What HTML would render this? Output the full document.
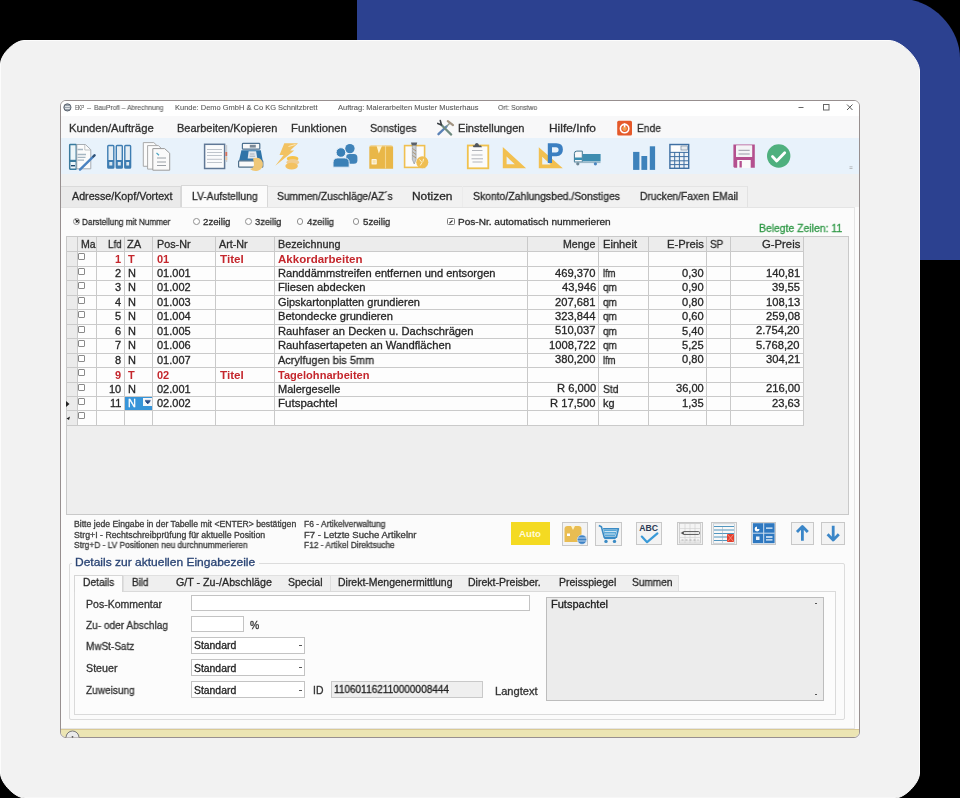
<!DOCTYPE html>
<html><head><meta charset="utf-8">
<style>
*{margin:0;padding:0;box-sizing:border-box}
html,body{width:960px;height:798px;overflow:hidden;background:#000;font-family:"Liberation Sans",sans-serif;color:#222;position:relative}
.a{position:absolute}
.t{position:absolute;white-space:nowrap;line-height:1;transform-origin:0 0;-webkit-text-stroke:0.3px currentColor;will-change:transform}
#blue{left:357px;top:0;width:603px;height:260px;background:#2c4190;border-top-right-radius:58px}
#panel{left:-1px;top:40px;width:921px;height:760px;background:#f2f2f2;border-radius:30px;box-shadow:0 0 0 1px #fbfbfb}
#win{left:60px;top:100px;width:800px;height:638px;border:1.2px solid #978f8f;border-radius:6px;background:#fbfbfb;overflow:hidden}
.ln{position:absolute;background:#d6d6d6}
.cb{position:absolute;width:7px;height:7px;border:1px solid #8a8a8a;border-radius:1px;background:#fff}
.inp{position:absolute;border:1px solid #c3c3c3;background:#fff}
.btn{position:absolute;border:1px solid #c8c8c8;background:#f3f3f3}
svg{position:absolute;overflow:visible}
</style></head><body>
<svg style="left:0;top:0" width="960" height="798" viewBox="0 0 960 798"><path d="M357 -1 L902 -1 C932.16 -1 960 27.84 960 58 L960 260 L357 260Z" fill="#2c4190"/><path d="M24 40.5 L889 40.5 C901.40 40.5 919.5 58.60 919.5 71 L919.5 773 C919.5 783.00 905.00 798 895 798 L25 798 C15.00 798 0.5 783.00 0.5 773 L0.5 64 C0.5 54.40 14.40 40.5 24 40.5Z" fill="#f2f2f2" stroke="#fcfcfc" stroke-width="1"/></svg>
<div class="a" id="win">
  <!-- inner coordinates: page - (61,101) -->
</div>
<!-- title bar -->
<div class="a" style="left:61px;top:101px;width:798px;height:15px;background:#fff;border-radius:5px 5px 0 0"></div>
<!-- menu bar -->
<div class="a" style="left:61px;top:116px;width:798px;height:22px;background:#f8f8f9"></div>
<!-- toolbar -->
<div class="a" style="left:61px;top:138px;width:798px;height:36px;background:#e8f2fb"></div>
<!-- tab strip bg -->
<div class="a" style="left:61px;top:174px;width:798px;height:33px;background:#f0f0f0"></div>
<!-- tabs -->
<div class="a" style="left:61px;top:185.5px;width:120px;height:22px;background:#eaeaea;border:1px solid #dadada;border-left:none;border-bottom:none"></div>
<div class="a" style="left:181px;top:185px;width:87px;height:23px;background:#fbfbfb;border:1px solid #d8d8d8;border-bottom:none"></div>
<div class="a" style="left:268px;top:185.5px;width:480px;height:22px;background:#f1f1f1;border-top:1px solid #e4e4e4;border-right:1px solid #e2e2e2"></div>
<div class="ln" style="left:462px;top:186px;width:1px;height:21px;background:#ebebeb"></div>
<!-- content panel -->
<div class="a" style="left:61px;top:207px;width:794px;height:522px;background:#fbfbfb;border:1px solid #e4e4e4;border-left:none"></div>
<!-- status bar -->
<div class="a" style="left:61px;top:728.5px;width:798px;height:8.5px;background:#ece5b3;border-top:1px solid #d9c995;border-radius:0 0 5px 5px"></div>

<!-- GRID -->
<div class="a" style="left:65.5px;top:236px;width:783px;height:278.5px;background:#eeeeee;border:1px solid #c9c9c9"></div>
<div class="a" style="left:66.5px;top:237.3px;width:737.0px;height:14.5px;background:#ececec"></div>
<div class="a" style="left:77.3px;top:251.8px;width:726.2px;height:173.64000000000001px;background:#fdfdfd"></div>
<div class="a" style="left:66.5px;top:251.8px;width:10.799999999999997px;height:173.64000000000001px;background:#ebebeb"></div>
<div class="ln" style="left:76.8px;top:236.3px;width:1px;height:189.14000000000004px;background:#c9c9c9"></div>
<div class="ln" style="left:95.8px;top:236.3px;width:1px;height:189.14000000000004px;background:#c9c9c9"></div>
<div class="ln" style="left:123.9px;top:236.3px;width:1px;height:189.14000000000004px;background:#c9c9c9"></div>
<div class="ln" style="left:152.0px;top:236.3px;width:1px;height:189.14000000000004px;background:#c9c9c9"></div>
<div class="ln" style="left:215.0px;top:236.3px;width:1px;height:189.14000000000004px;background:#c9c9c9"></div>
<div class="ln" style="left:274.0px;top:236.3px;width:1px;height:189.14000000000004px;background:#c9c9c9"></div>
<div class="ln" style="left:527.0px;top:236.3px;width:1px;height:189.14000000000004px;background:#c9c9c9"></div>
<div class="ln" style="left:597.8px;top:236.3px;width:1px;height:189.14000000000004px;background:#c9c9c9"></div>
<div class="ln" style="left:648.4px;top:236.3px;width:1px;height:189.14000000000004px;background:#c9c9c9"></div>
<div class="ln" style="left:706.0px;top:236.3px;width:1px;height:189.14000000000004px;background:#c9c9c9"></div>
<div class="ln" style="left:729.9px;top:236.3px;width:1px;height:189.14000000000004px;background:#c9c9c9"></div>
<div class="ln" style="left:803.0px;top:236.3px;width:1px;height:189.14000000000004px;background:#c9c9c9"></div>
<div class="ln" style="left:65.5px;top:251.3px;width:738.0px;height:1px;background:#cacaca"></div>
<div class="ln" style="left:65.5px;top:265.77000000000004px;width:738.0px;height:1px;background:#cacaca"></div>
<div class="ln" style="left:65.5px;top:280.24px;width:738.0px;height:1px;background:#cacaca"></div>
<div class="ln" style="left:65.5px;top:294.71000000000004px;width:738.0px;height:1px;background:#cacaca"></div>
<div class="ln" style="left:65.5px;top:309.18px;width:738.0px;height:1px;background:#cacaca"></div>
<div class="ln" style="left:65.5px;top:323.65000000000003px;width:738.0px;height:1px;background:#cacaca"></div>
<div class="ln" style="left:65.5px;top:338.12px;width:738.0px;height:1px;background:#cacaca"></div>
<div class="ln" style="left:65.5px;top:352.59000000000003px;width:738.0px;height:1px;background:#cacaca"></div>
<div class="ln" style="left:65.5px;top:367.06px;width:738.0px;height:1px;background:#cacaca"></div>
<div class="ln" style="left:65.5px;top:381.53000000000003px;width:738.0px;height:1px;background:#cacaca"></div>
<div class="ln" style="left:65.5px;top:396.0px;width:738.0px;height:1px;background:#cacaca"></div>
<div class="ln" style="left:65.5px;top:410.47px;width:738.0px;height:1px;background:#cacaca"></div>
<div class="ln" style="left:65.5px;top:424.94000000000005px;width:738.0px;height:1px;background:#cacaca"></div>
<div class="cb" style="left:78px;top:253.30px"></div>
<div class="cb" style="left:78px;top:267.77px"></div>
<div class="cb" style="left:78px;top:282.24px"></div>
<div class="cb" style="left:78px;top:296.71px"></div>
<div class="cb" style="left:78px;top:311.18px"></div>
<div class="cb" style="left:78px;top:325.65px"></div>
<div class="cb" style="left:78px;top:340.12px"></div>
<div class="cb" style="left:78px;top:354.59px"></div>
<div class="cb" style="left:78px;top:369.06px"></div>
<div class="cb" style="left:78px;top:383.53px"></div>
<div class="cb" style="left:78px;top:398.00px"></div>
<div class="cb" style="left:78px;top:412.47px"></div>
<div class="a" style="left:124.6px;top:397.00px;width:27.6px;height:13.47px;background:#3795d9"></div>
<div class="a" style="left:143.3px;top:397.50px;width:8.7px;height:8.5px;background:#f4f7fb"></div>
<svg style="left:145px;top:400.00px" width="6" height="5"><path d="M0 0.4h5.6M0.6 1.5h4.4L2.8 3.8z" stroke="#1c3f7a" stroke-width="0.8" fill="#1c3f7a"/></svg>
<svg style="left:66px;top:401.00px" width="4" height="6"><path d="M0 0L3.5 3L0 6z" fill="#222"/></svg>
<svg style="left:66px;top:415.97px" width="5" height="5"><path d="M0.5 2.5L4 0.5L3 4z" fill="#222"/></svg>

<!-- radio row -->
<div class="a" style="left:73px;top:217.8px;width:6.8px;height:6.8px;border:1px solid #8a8a8a;border-radius:50%;background:#fff"></div>
<svg style="left:74.5px;top:219.3px" width="4" height="4"><path d="M0.3 0.3L3.7 3.7M3.7 0.8L0.8 3.5" stroke="#222" stroke-width="1.1"/></svg>
<div class="a" style="left:193px;top:218px;width:6.8px;height:6.8px;border:1px solid #8f8f8f;border-radius:50%;background:#fff"></div>
<div class="a" style="left:244.8px;top:218px;width:6.8px;height:6.8px;border:1px solid #8f8f8f;border-radius:50%;background:#fff"></div>
<div class="a" style="left:296.6px;top:218px;width:6.8px;height:6.8px;border:1px solid #8f8f8f;border-radius:50%;background:#fff"></div>
<div class="a" style="left:352.6px;top:218px;width:6.8px;height:6.8px;border:1px solid #8f8f8f;border-radius:50%;background:#fff"></div>
<div class="a" style="left:447.3px;top:217.6px;width:7.5px;height:7.5px;border:1px solid #7a7a7a;border-radius:1.5px;background:#fff"></div>
<svg style="left:449px;top:219.5px" width="4" height="4"><path d="M0.5 3.2L3.5 0.5" stroke="#333" stroke-width="1.2"/></svg>

<!-- DETAILS group -->
<div class="a" style="left:69.4px;top:562.5px;width:775.3px;height:157.2px;border:1px solid #dcdcdc;border-radius:2px"></div>
<div class="a" style="left:72px;top:556px;width:187px;height:12px;background:#fbfbfb"></div>
<!-- tab strip -->
<div class="a" style="left:123px;top:575.3px;width:556px;height:16px;background:#efefef;border:1px solid #e0e0e0;border-bottom:none"></div>
<div class="ln" style="left:329.8px;top:576px;width:1px;height:15px;background:#dedede"></div>
<div class="a" style="left:74.3px;top:591px;width:761.6px;height:123.7px;border:1px solid #dadada;background:#fcfcfc"></div>
<div class="a" style="left:73.8px;top:574.7px;width:49.2px;height:17.3px;background:#fcfcfc;border:1px solid #d6d6d6;border-bottom:none"></div>
<!-- inputs -->
<div class="inp" style="left:191.4px;top:595.3px;width:338.2px;height:16.2px"></div>
<div class="inp" style="left:191.4px;top:615.8px;width:52.8px;height:16.7px"></div>
<div class="inp" style="left:191.4px;top:636.8px;width:113.8px;height:17px"></div>
<div class="inp" style="left:191.4px;top:659.3px;width:113.8px;height:16.7px"></div>
<div class="inp" style="left:191.4px;top:681px;width:113.8px;height:17.3px"></div>
<div class="a" style="left:299px;top:645px;width:3px;height:1.2px;background:#555"></div>
<div class="a" style="left:299px;top:667.3px;width:3px;height:1.2px;background:#555"></div>
<div class="a" style="left:299px;top:689.5px;width:3px;height:1.2px;background:#555"></div>
<div class="inp" style="left:330.8px;top:681px;width:152.2px;height:17.3px;background:#efefef;border-color:#c9c9c9"></div>
<div class="inp" style="left:546.3px;top:597px;width:277.3px;height:104.4px;background:#ececec;border-color:#bdbdbd"></div>
<div class="a" style="left:815px;top:602.5px;width:2px;height:1.2px;background:#555"></div>
<div class="a" style="left:815px;top:694px;width:2px;height:1.2px;background:#555"></div>

<!-- bottom buttons -->
<div class="a" style="left:511px;top:521.6px;width:38.5px;height:23.8px;background:#f4da22"></div>
<div class="btn" style="left:561.9px;top:521.6px;width:26px;height:24.2px"></div>
<div class="btn" style="left:595.4px;top:521.6px;width:26.2px;height:24.2px"></div>
<div class="btn" style="left:636.3px;top:521.5px;width:26px;height:23.7px"></div>
<div class="btn" style="left:677px;top:521.5px;width:25.7px;height:23.7px"></div>
<div class="btn" style="left:711.3px;top:521.5px;width:25.5px;height:23.7px"></div>
<div class="btn" style="left:751px;top:521.5px;width:25.2px;height:23.7px"></div>
<div class="btn" style="left:790.8px;top:521.5px;width:23.2px;height:23.7px"></div>
<div class="btn" style="left:821.2px;top:521.5px;width:23.5px;height:23.7px"></div>
<svg style="left:0;top:0" width="960" height="798" viewBox="0 0 960 798">
 <!-- title icon -->
 <circle cx="67.4" cy="107.4" r="3.6" fill="#9aa3ad" stroke="#5d6570" stroke-width="1"/>
 <path d="M65 106.5h4.8M65 108.5h4.8" stroke="#fff" stroke-width="0.7"/>
 <!-- window buttons -->
 <path d="M798.5 107.5h5" stroke="#666" stroke-width="1"/>
 <rect x="823.5" y="104.5" width="5.5" height="5.5" fill="none" stroke="#666" stroke-width="1"/>
 <path d="M847 104.5l5.5 5.5M852.5 104.5l-5.5 5.5" stroke="#555" stroke-width="1"/>
 <!-- tools icon -->
 <path d="M438.5 134.2L446.5 126.5" stroke="#5b82b6" stroke-width="2.4" stroke-linecap="round"/>
 <path d="M446.5 126.5L450.5 122.5" stroke="#8a9a90" stroke-width="1.4"/>
 <path d="M447.8 121.2L453 125.2" stroke="#a29482" stroke-width="2.2" stroke-linecap="round"/>
 <path d="M451.2 134.6L441.5 125" stroke="#6e8a80" stroke-width="2.2" stroke-linecap="round"/>
 <path d="M441.5 125L437.8 123.4M441.5 125L440.3 120.6" stroke="#3a3f44" stroke-width="1.6" stroke-linecap="round"/>
 <!-- ende icon -->
 <rect x="617.2" y="120.8" width="14.8" height="14.6" rx="1.5" fill="#e5592a"/>
 <circle cx="624.6" cy="128.6" r="4.2" fill="none" stroke="#fff" stroke-width="1.6"/>
 <circle cx="624.6" cy="128.6" r="2.3" fill="#f0a050"/>
 <path d="M624.6 123.3v4" stroke="#fff" stroke-width="1.5"/>

 <!-- T1: binder + doc + pen -->
 <rect x="69.7" y="144.6" width="6.6" height="24.6" rx="0.6" fill="#eef6f9" stroke="#3a7b9e" stroke-width="1.5"/>
 <rect x="69.7" y="159.8" width="6.6" height="2.2" fill="#3a7b9e"/>
 <rect x="71" y="165" width="4" height="1.4" fill="#1f4a6e"/>
 <path d="M76.8 144.5h8.6l5.4 5.2v19.1h-14z" fill="#fbfbfb" stroke="#9ea4aa" stroke-width="0.9"/>
 <path d="M84.8 144.8v5.2h5.6" fill="none" stroke="#a8acb0" stroke-width="0.7"/>
 <path d="M77.5 149.5h5.5M77.5 154.5h8.5M77.5 157.3h8M77.5 160.2h6.5" stroke="#a6b6c2" stroke-width="1.3"/>
 <path d="M80 169.6L94.5 155.3" stroke="#4a82c0" stroke-width="2.4" stroke-linecap="round"/>
 <path d="M93.2 156.6L94.6 155.2" stroke="#34506e" stroke-width="2" stroke-linecap="round"/>
 <!-- T2: three binders -->
 <g fill="#e6eef4" stroke="#3e7db2" stroke-width="1.4">
  <rect x="107.8" y="145.5" width="6" height="22.5" rx="0.8"/>
  <rect x="116.3" y="145.5" width="6" height="22.5" rx="0.8"/>
  <rect x="124.8" y="145.5" width="5.8" height="22.5" rx="0.8"/>
 </g>
 <g fill="#3e7db2"><rect x="107.8" y="160" width="6" height="8"/><rect x="116.3" y="160" width="6" height="8"/><rect x="124.8" y="160" width="5.8" height="8"/></g>
 <g fill="#dce8f0"><rect x="109.3" y="162" width="3" height="3.5"/><rect x="117.8" y="162" width="3" height="3.5"/><rect x="126.3" y="162" width="2.8" height="3.5"/></g>
 <!-- T3: stacked docs -->
 <path d="M143.3 142.6h10.5l3.4 3.2v20.5h-13.9z" fill="#fbfbfb" stroke="#a0a0a0" stroke-width="0.9"/>
 <path d="M147.6 145.6h10.8l3.4 3.2v20.3h-14.2z" fill="#fbfbfb" stroke="#a0a0a0" stroke-width="0.9"/>
 <path d="M152.8 148.6h11.8l5.1 4.6v17h-16.9z" fill="#fafafa" stroke="#9a9a9a" stroke-width="1"/>
 <path d="M156.5 153l2.5 2.2" stroke="#4aa3c0" stroke-width="1.2"/>
 <path d="M157 158h9M157 162h9M157 165.5h9" stroke="#9a9fa5" stroke-width="1.1"/>
 <!-- T4: ledger -->
 <rect x="204.6" y="144.3" width="20" height="24.2" fill="#fafbfc" stroke="#607896" stroke-width="1.5"/>
 <path d="M207 149.5h15M207 152.5h15M207 155.5h15M207 159.3h15M207 162.5h15" stroke="#b8bec6" stroke-width="0.9"/>
 <rect x="225.4" y="145" width="1.8" height="17" fill="#c9ccd0"/>
 <rect x="225.4" y="152" width="1.8" height="4" fill="#d9705a"/>
 <rect x="225.4" y="157" width="1.8" height="3" fill="#f0c8a0"/>
 <!-- T5: cash register -->
 <rect x="242.4" y="143.4" width="17.4" height="5.8" rx="0.8" fill="#f8f8f8" stroke="#4f7290" stroke-width="1.2"/>
 <rect x="249.8" y="144.8" width="6" height="2.8" fill="#7a8896"/>
 <path d="M241.4 150.2h19.4l2 10.8h-23.8z" fill="#2f74a8"/>
 <path d="M248.6 151.2h7.5l1.2 7.4h-9.6z" fill="#e2e8ee"/>
 <path d="M250 154h4.5M249.6 156.2h5.5" stroke="#8a98a6" stroke-width="0.7"/>
 <rect x="238.6" y="160.8" width="24.2" height="6.4" rx="0.8" fill="#fafafa" stroke="#50708a" stroke-width="1.2"/>
 <path d="M253 158.5q7-2.5 9.5 3.5q1.5 6-4 8.5q-5 1.5-8.5-1.5q3.5-0.5 4-4q0-3-1-6.5z" fill="#f0c878"/>
 <!-- T6: lightning + coins -->
 <path d="M284.3 143.2L298 143.2L290.2 150.6L294.2 150.6L275.3 165.8L283.6 155L279.5 155Z" fill="#f2c262"/>
 <path d="M288.5 146.5l7-2" stroke="#fff5d8" stroke-width="0.8"/>
 <ellipse cx="292.6" cy="158.7" rx="5.8" ry="2.6" fill="#f5c24a"/>
 <ellipse cx="292.8" cy="162.2" rx="6.3" ry="3.2" fill="#f1cc8e"/>
 <ellipse cx="291.6" cy="166.1" rx="6.3" ry="3.3" fill="#f3c160"/>
 <!-- T7: people -->
 <g fill="#3f83b9">
  <circle cx="349.9" cy="148.6" r="4.7"/>
  <path d="M346.2 163.8v-6.5q0-3.3 3.3-3.3h4.5q3.4 0 3.4 3.6v2.6q0 3.6-3.5 3.6z"/>
 </g>
 <g fill="#3a80b6" stroke="#e5eef8" stroke-width="1">
  <circle cx="340.9" cy="152.5" r="4.8"/>
  <path d="M333 167.2v-4.5q0-4.8 4.8-4.8h6.5q4.9 0 4.9 4.8v4.5z"/>
 </g>
 <!-- T8: box -->
 <path d="M369.3 147.5q0-2 2-2h19.5q2.3 0 2.3 2v21.2h-23.8z" fill="#e9b748"/>
 <path d="M376.5 145.5l2.3 8l3.3-8z" fill="#fff4d0"/>
 <path d="M385.5 145.6v23" stroke="#f4d58c" stroke-width="1.1"/>
 <rect x="372" y="159.6" width="4.2" height="4.4" fill="#f7e4b0" stroke="#fff" stroke-width="0.8"/>
 <path d="M369.5 146h23" stroke="#f2dca8" stroke-width="0.8"/>
 <!-- T9: clipboard drill -->
 <rect x="404.6" y="145.6" width="20" height="21.8" fill="#fbfbfb" stroke="#f0c050" stroke-width="1.6"/>
 <path d="M411 142.5h6.2l-0.8 3h-4.6z" fill="#5a6068"/>
 <path d="M412.3 145.5h3.8v14l-1.9 4.5l-1.9-4.5z" fill="#c9cdd2" stroke="#7a8088" stroke-width="0.5"/>
 <path d="M412.5 148.5l3.6 2.5M412.5 152l3.6 2.5M412.5 155.5l3.6 2.5" stroke="#a08050" stroke-width="0.7"/>
 <circle cx="422.3" cy="162.3" r="6" fill="#efbe52"/>
 <path d="M419.5 159.5l2.5 3l-1.8 3M423.5 158.8l-0.6 3" fill="none" stroke="#fff3cf" stroke-width="1"/>
 <!-- T10: clipboard -->
 <rect x="467.8" y="145.5" width="20.5" height="22.8" fill="#fbfbfb" stroke="#f0c24e" stroke-width="1.8"/>
 <path d="M473.5 147.2h8.5l-1-1.8h-1.8q-1-2.3-2.4-2.3q-1.4 0-2.4 2.3h-1.8z" fill="#50565e"/>
 <path d="M472 150.5h10.5M471.5 155h11M471.5 158.8h11.5M472.5 162h10" stroke="#a9adb3" stroke-width="0.9"/>
 <!-- T11: triangle -->
 <path d="M502.8 147l23.3 21.2h-23.3z M506.6 156.6v7.6h8.2z" fill="#f2c050" fill-rule="evenodd"/>
 <!-- T12: P + triangle -->
 <path d="M538.8 147.2l24 21h-24z M542.2 156.8v7.6h8.4z" fill="#f2c050" fill-rule="evenodd"/>
 <path d="M547.8 163V143.2h8.5q6.6 0 6.6 6.4q0 6.6-6.6 6.6h-4.3v6.8z M552 147.2v5.3h4q2.6 0 2.6-2.7q0-2.6-2.6-2.6z" fill="#3b7fc1" fill-rule="evenodd"/>
 <!-- T13: truck -->
 <path d="M574.4 162v-8.5q0-2.4 2.4-2.4h5.5v10.9z" fill="#f8f8f8" stroke="#3f7590" stroke-width="1"/>
 <path d="M574.8 157.5h7.2v2.5h-7.2z" fill="#3a90b3"/>
 <rect x="582.6" y="154" width="18" height="7.4" fill="#3e8db0"/>
 <rect x="574.5" y="161.5" width="26" height="1.6" fill="#9ab8c8"/>
 <circle cx="577.8" cy="163.8" r="1.6" fill="#6d8796"/>
 <circle cx="595.4" cy="163.8" r="1.6" fill="#4a86c0"/>
 <!-- T14: bars -->
 <g fill="#3d82bb"><rect x="633.1" y="151.9" width="6.3" height="18"/><rect x="641.4" y="156" width="5.8" height="13.9"/><rect x="649.8" y="146.3" width="5.3" height="23.6"/></g>
 <!-- T15: calculator -->
 <rect x="669.9" y="144.5" width="18.8" height="23.8" fill="#eef3f8" stroke="#3e6fa2" stroke-width="1.4"/>
 <rect x="671.3" y="146" width="8.6" height="5.4" fill="#fdfdfd"/>
 <rect x="681" y="146" width="6.3" height="4" fill="#e6eaee" stroke="#6a7f96" stroke-width="0.6"/>
 <g stroke="#3e6fa2" stroke-width="1"><path d="M670 152.4h18.6M670 156.6h18.6M670 160.8h18.6M670 164.6h18.6"/><path d="M674.7 152v16M679.4 152v16M684 152v16"/></g>
 <!-- T16: floppy -->
 <path d="M733.4 144.6h21.4v23.2h-20.4l-1-1z" fill="#b4508f"/>
 <rect x="736" y="145.2" width="16.2" height="11.8" rx="0.6" fill="#f4f4f6"/>
 <path d="M738.5 150.3h11.2M738.5 154h11.2" stroke="#9a9aa8" stroke-width="1"/>
 <rect x="737.2" y="160" width="13.5" height="8" fill="#fafafa"/>
 <rect x="739.5" y="161" width="2.3" height="6.5" fill="#b4508f"/>
 <!-- T17: check -->
 <circle cx="778.7" cy="156" r="11.7" fill="#4fb07e"/>
 <path d="M772.5 156.6l4.2 4.3l8-8.2" fill="none" stroke="#fff" stroke-width="2.8" stroke-linecap="round" stroke-linejoin="round"/>
 <!-- grip -->
 <path d="M849.5 166.8h3M849.5 168.5h3" stroke="#999" stroke-width="0.6"/>

 <!-- buttons icons -->
 <text x="519" y="537" font-family="Liberation Sans" font-size="8.5" font-weight="bold" fill="#fffbd8" textLength="22" lengthAdjust="spacingAndGlyphs">Auto</text>
 <!-- btn2 -->
 <path d="M564.5 529q0-3 3-3h11q3 0 3 3v13h-17z" fill="#e9bd52"/>
 <path d="M571 526l2 4l2-4" fill="#fff3c8"/>
 <rect x="567" y="533.5" width="3" height="2.5" fill="#fff"/>
 <circle cx="582" cy="539.6" r="4.7" fill="#3e83c6" stroke="#e8f0f8" stroke-width="0.6"/>
 <path d="M577.8 538h8.4M577.8 541h8.4" stroke="#dfeaf5" stroke-width="0.8"/>
 <!-- btn3 cart -->
 <path d="M598.8 525.5l2.6 1.2l2.8 10.5h12.2l2-8.5h-15.3" fill="none" stroke="#3a8bc5" stroke-width="1.6" stroke-linejoin="round"/>
 <path d="M603.3 529.5h13.8l-1.8 6.5h-10.4z" fill="#58a6d6"/>
 <path d="M604.5 531.5h11.5M605 534h10" stroke="#e8f4fa" stroke-width="0.8"/>
 <circle cx="606" cy="541.4" r="1.7" fill="#3a8bc5"/><circle cx="614.5" cy="541.4" r="1.7" fill="#3a8bc5"/>
 <path d="M604.2 538.5h11.5" stroke="#3a8bc5" stroke-width="1.2"/>
 <!-- btn4 ABC -->
 <text x="639.3" y="531" font-family="Liberation Sans" font-size="8.4" font-weight="bold" fill="#2a3a55" textLength="18.8" lengthAdjust="spacingAndGlyphs">ABC</text>
 <path d="M641.8 536.6l5.3 5.6l10.3-8.8" fill="none" stroke="#3a9ad8" stroke-width="2.2" stroke-linejoin="round" stroke-linecap="round"/>
 <!-- btn5 table -->
 <rect x="679.5" y="523.5" width="21" height="19.5" fill="#f4f4f4" stroke="#c0c0c0" stroke-width="0.7"/>
 <path d="M680 528.5h20M680 533h20M680 537.5h20M680 541h20M685 524v19M690 524v19M695 524v19" stroke="#cfcfcf" stroke-width="0.6"/>
 <rect x="683" y="531.5" width="16.5" height="3" rx="1" fill="none" stroke="#555" stroke-width="0.9"/>
 <circle cx="682.7" cy="533" r="1.3" fill="#555"/>
 <path d="M681.5 540h17" stroke="#888" stroke-width="0.6" stroke-dasharray="2 2"/>
 <!-- btn6 table red x -->
 <rect x="713.5" y="523.8" width="21" height="19.5" fill="#f8f8f8" stroke="#b8c4cc" stroke-width="0.7"/>
 <path d="M714 526.5h20M714 530h20M714 533.5h20M714 537h20M714 540.5h20" stroke="#3d8ab8" stroke-width="0.9"/>
 <path d="M722.5 527v16" stroke="#9ab" stroke-width="0.5"/>
 <rect x="727" y="534" width="7" height="8" fill="#e4402e"/>
 <path d="M727.5 534.5l6 7M733.5 534.5l-6 7" stroke="#f89080" stroke-width="0.9"/>
 <!-- btn7 grid -->
 <rect x="752.8" y="523.2" width="21.8" height="20" fill="#2e78c0"/>
 <path d="M763.7 523.2v20M752.8 533.2h21.8" stroke="#cfe0f0" stroke-width="1"/>
 <path d="M757 526.5a2.5 2.5 0 1 0 2.6 2.6h-2.6z" fill="#fff"/>
 <path d="M766 528.2h6.5M766 537h6.5M766 539.8h6.5" stroke="#eaf2fa" stroke-width="1.3"/>
 <rect x="756" y="536.5" width="3.5" height="3.5" fill="#eaf2fa"/>
 <!-- btn8 up -->
 <path d="M802.4 540.8v-14M797 532l5.4-5.6l5.4 5.6" fill="none" stroke="#3a86c8" stroke-width="2.8" stroke-linejoin="round"/>
 <!-- btn9 down -->
 <path d="M833.2 525.7v14M827.6 534.3l5.6 5.8l5.6-5.8" fill="none" stroke="#3a86c8" stroke-width="2.8" stroke-linejoin="round"/>
 <!-- status circle -->
 <path d="M66 737.5a6.5 6.5 0 0 1 13 0" fill="#eaeaea" stroke="#777" stroke-width="1"/>
 <circle cx="72.5" cy="736.8" r="0.9" fill="#555"/>
</svg>


<div class="t" style="left:74.70px;top:104.21px;font-size:7.2px;color:#595959;transform:scaleX(0.6463);-webkit-text-stroke:0.1px currentColor;">EKP</div>
<div class="t" style="left:87.00px;top:104.21px;font-size:7.2px;color:#595959;-webkit-text-stroke:0.1px currentColor;">–</div>
<div class="t" style="left:94.00px;top:104.21px;font-size:7.2px;color:#595959;transform:scaleX(0.9373);-webkit-text-stroke:0.1px currentColor;">BauProfi – Abrechnung</div>
<div class="t" style="left:175.00px;top:104.21px;font-size:7.2px;color:#595959;transform:scaleX(1.0399);-webkit-text-stroke:0.1px currentColor;">Kunde: Demo GmbH &amp; Co KG Schnitzbrett</div>
<div class="t" style="left:337.50px;top:104.21px;font-size:7.2px;color:#595959;transform:scaleX(1.0435);-webkit-text-stroke:0.1px currentColor;">Auftrag: Malerarbeiten Muster Musterhaus</div>
<div class="t" style="left:497.50px;top:104.21px;font-size:7.2px;color:#595959;transform:scaleX(0.9435);-webkit-text-stroke:0.1px currentColor;">Ort: Sonstwo</div>
<div class="t" style="left:68.70px;top:122.89px;font-size:11px;color:#303030;transform:scaleX(1.0257);">Kunden/Aufträge</div>
<div class="t" style="left:177.40px;top:122.89px;font-size:11px;color:#303030;">Bearbeiten/Kopieren</div>
<div class="t" style="left:290.70px;top:122.89px;font-size:11px;color:#303030;transform:scaleX(1.0232);">Funktionen</div>
<div class="t" style="left:369.80px;top:122.89px;font-size:11px;color:#303030;transform:scaleX(0.9646);">Sonstiges</div>
<div class="t" style="left:457.50px;top:122.89px;font-size:11px;color:#303030;transform:scaleX(1.0066);">Einstellungen</div>
<div class="t" style="left:549.00px;top:122.89px;font-size:11px;color:#303030;transform:scaleX(1.0824);">Hilfe/Info</div>
<div class="t" style="left:637.00px;top:122.89px;font-size:11px;color:#303030;transform:scaleX(0.9337);">Ende</div>
<div class="t" style="left:71.70px;top:191.14px;font-size:10.7px;color:#2a2a2a;">Adresse/Kopf/Vortext</div>
<div class="t" style="left:192.00px;top:191.14px;font-size:10.7px;color:#2a2a2a;transform:scaleX(0.9627);">LV-Aufstellung</div>
<div class="t" style="left:277.00px;top:191.14px;font-size:10.7px;color:#2a2a2a;transform:scaleX(0.9595);">Summen/Zuschläge/AZ´s</div>
<div class="t" style="left:412.00px;top:191.14px;font-size:10.7px;color:#2a2a2a;transform:scaleX(1.1145);">Notizen</div>
<div class="t" style="left:472.90px;top:191.14px;font-size:10.7px;color:#2a2a2a;transform:scaleX(0.9740);">Skonto/Zahlungsbed./Sonstiges</div>
<div class="t" style="left:640.00px;top:191.14px;font-size:10.7px;color:#2a2a2a;transform:scaleX(0.9592);">Drucken/Faxen EMail</div>
<div class="t" style="left:81.90px;top:217.19px;font-size:9.7px;color:#2e2e2e;transform:scaleX(0.8455);">Darstellung mit Nummer</div>
<div class="t" style="left:203.10px;top:217.19px;font-size:9.7px;color:#2e2e2e;">2zeilig</div>
<div class="t" style="left:255.20px;top:217.19px;font-size:9.7px;color:#2e2e2e;transform:scaleX(0.9611);">3zeilig</div>
<div class="t" style="left:307.00px;top:217.19px;font-size:9.7px;color:#2e2e2e;transform:scaleX(0.9829);">4zeilig</div>
<div class="t" style="left:362.50px;top:217.19px;font-size:9.7px;color:#2e2e2e;transform:scaleX(0.9939);">5zeilig</div>
<div class="t" style="left:458.30px;top:217.19px;font-size:9.7px;color:#2e2e2e;transform:scaleX(1.0389);">Pos-Nr. automatisch nummerieren</div>
<div class="t" style="left:758.75px;top:222.76px;font-size:10.8px;color:#2f9846;transform:scaleX(0.9648);">Belegte Zeilen: 11</div>
<div class="t" style="left:80.90px;top:238.78px;font-size:10.6px;color:#2c2c2c;transform:scaleX(0.9919);">Ma</div>
<div class="t" style="left:107.50px;top:238.78px;font-size:10.6px;color:#2c2c2c;transform:scaleX(0.9332);">Lfd</div>
<div class="t" style="left:127.00px;top:238.78px;font-size:10.6px;color:#2c2c2c;transform:scaleX(1.0482);">ZA</div>
<div class="t" style="left:157.00px;top:238.78px;font-size:10.6px;color:#2c2c2c;transform:scaleX(1.0161);">Pos-Nr</div>
<div class="t" style="left:218.75px;top:238.78px;font-size:10.6px;color:#2c2c2c;transform:scaleX(1.0159);">Art-Nr</div>
<div class="t" style="left:277.50px;top:238.78px;font-size:10.6px;color:#2c2c2c;transform:scaleX(1.0201);">Bezeichnung</div>
<div class="t" style="left:562.70px;top:238.78px;font-size:10.6px;color:#2c2c2c;">Menge</div>
<div class="t" style="left:602.70px;top:238.78px;font-size:10.6px;color:#2c2c2c;transform:scaleX(1.0492);">Einheit</div>
<div class="t" style="left:666.70px;top:238.78px;font-size:10.6px;color:#2c2c2c;transform:scaleX(1.0595);">E-Preis</div>
<div class="t" style="left:710.00px;top:238.78px;font-size:10.6px;color:#2c2c2c;transform:scaleX(0.9406);">SP</div>
<div class="t" style="left:761.70px;top:238.78px;font-size:10.6px;color:#2c2c2c;transform:scaleX(1.0667);">G-Preis</div>
<div class="t" style="left:115.17px;top:254.09px;font-size:11px;color:#c4262c;font-weight:bold;-webkit-text-stroke:0;">1</div>
<div class="t" style="left:127.75px;top:254.09px;font-size:11px;color:#c4262c;font-weight:bold;-webkit-text-stroke:0;">T</div>
<div class="t" style="left:156.70px;top:254.09px;font-size:11px;color:#c4262c;font-weight:bold;-webkit-text-stroke:0;">01</div>
<div class="t" style="left:220.00px;top:254.09px;font-size:11px;color:#c4262c;font-weight:bold;-webkit-text-stroke:0;transform:scaleX(1.0592);">Titel</div>
<div class="t" style="left:277.50px;top:254.09px;font-size:11px;color:#c4262c;font-weight:bold;-webkit-text-stroke:0;transform:scaleX(1.0470);">Akkordarbeiten</div>
<div class="t" style="left:115.17px;top:267.76px;font-size:11px;color:#262626;">2</div>
<div class="t" style="left:127.75px;top:267.76px;font-size:11px;color:#262626;">N</div>
<div class="t" style="left:156.70px;top:267.76px;font-size:11px;color:#262626;">01.001</div>
<div class="t" style="left:277.50px;top:267.76px;font-size:11px;color:#262626;transform:scaleX(1.0076);">Randdämmstreifen entfernen und entsorgen</div>
<div class="t" style="left:555.35px;top:267.59px;font-size:11.2px;color:#262626;">469,370</div>
<div class="t" style="left:602.80px;top:267.76px;font-size:11px;color:#262626;transform:scaleX(0.8520);">lfm</div>
<div class="t" style="left:681.91px;top:267.67px;font-size:11.1px;color:#262626;">0,30</div>
<div class="t" style="left:765.78px;top:267.59px;font-size:11.2px;color:#262626;">140,81</div>
<div class="t" style="left:115.17px;top:282.23px;font-size:11px;color:#262626;">3</div>
<div class="t" style="left:127.75px;top:282.23px;font-size:11px;color:#262626;">N</div>
<div class="t" style="left:156.70px;top:282.23px;font-size:11px;color:#262626;">01.002</div>
<div class="t" style="left:277.50px;top:282.23px;font-size:11px;color:#262626;transform:scaleX(1.0147);">Fliesen abdecken</div>
<div class="t" style="left:561.58px;top:282.06px;font-size:11.2px;color:#262626;">43,946</div>
<div class="t" style="left:602.80px;top:282.23px;font-size:11px;color:#262626;transform:scaleX(0.9096);">qm</div>
<div class="t" style="left:681.91px;top:282.14px;font-size:11.1px;color:#262626;">0,90</div>
<div class="t" style="left:772.00px;top:282.06px;font-size:11.2px;color:#262626;">39,55</div>
<div class="t" style="left:115.17px;top:296.70px;font-size:11px;color:#262626;">4</div>
<div class="t" style="left:127.75px;top:296.70px;font-size:11px;color:#262626;">N</div>
<div class="t" style="left:156.70px;top:296.70px;font-size:11px;color:#262626;">01.003</div>
<div class="t" style="left:277.50px;top:296.70px;font-size:11px;color:#262626;">Gipskartonplatten grundieren</div>
<div class="t" style="left:555.35px;top:296.53px;font-size:11.2px;color:#262626;">207,681</div>
<div class="t" style="left:602.80px;top:296.70px;font-size:11px;color:#262626;transform:scaleX(0.9096);">qm</div>
<div class="t" style="left:681.91px;top:296.61px;font-size:11.1px;color:#262626;">0,80</div>
<div class="t" style="left:765.78px;top:296.53px;font-size:11.2px;color:#262626;">108,13</div>
<div class="t" style="left:115.17px;top:311.17px;font-size:11px;color:#262626;">5</div>
<div class="t" style="left:127.75px;top:311.17px;font-size:11px;color:#262626;">N</div>
<div class="t" style="left:156.70px;top:311.17px;font-size:11px;color:#262626;">01.004</div>
<div class="t" style="left:277.50px;top:311.17px;font-size:11px;color:#262626;transform:scaleX(1.0101);">Betondecke grundieren</div>
<div class="t" style="left:555.35px;top:311.00px;font-size:11.2px;color:#262626;">323,844</div>
<div class="t" style="left:602.80px;top:311.17px;font-size:11px;color:#262626;transform:scaleX(0.9096);">qm</div>
<div class="t" style="left:681.91px;top:311.08px;font-size:11.1px;color:#262626;">0,60</div>
<div class="t" style="left:765.78px;top:311.00px;font-size:11.2px;color:#262626;">259,08</div>
<div class="t" style="left:115.17px;top:325.64px;font-size:11px;color:#262626;">6</div>
<div class="t" style="left:127.75px;top:325.64px;font-size:11px;color:#262626;">N</div>
<div class="t" style="left:156.70px;top:325.64px;font-size:11px;color:#262626;">01.005</div>
<div class="t" style="left:277.50px;top:325.64px;font-size:11px;color:#262626;transform:scaleX(1.0149);">Rauhfaser an Decken u. Dachschrägen</div>
<div class="t" style="left:555.35px;top:325.47px;font-size:11.2px;color:#262626;">510,037</div>
<div class="t" style="left:602.80px;top:325.64px;font-size:11px;color:#262626;transform:scaleX(0.9096);">qm</div>
<div class="t" style="left:681.91px;top:325.55px;font-size:11.1px;color:#262626;">5,40</div>
<div class="t" style="left:756.44px;top:325.47px;font-size:11.2px;color:#262626;">2.754,20</div>
<div class="t" style="left:115.17px;top:340.11px;font-size:11px;color:#262626;">7</div>
<div class="t" style="left:127.75px;top:340.11px;font-size:11px;color:#262626;">N</div>
<div class="t" style="left:156.70px;top:340.11px;font-size:11px;color:#262626;">01.006</div>
<div class="t" style="left:277.50px;top:340.11px;font-size:11px;color:#262626;transform:scaleX(1.0194);">Rauhfasertapeten an Wandflächen</div>
<div class="t" style="left:549.13px;top:339.94px;font-size:11.2px;color:#262626;">1008,722</div>
<div class="t" style="left:602.80px;top:340.11px;font-size:11px;color:#262626;transform:scaleX(0.9096);">qm</div>
<div class="t" style="left:681.91px;top:340.02px;font-size:11.1px;color:#262626;">5,25</div>
<div class="t" style="left:756.44px;top:339.94px;font-size:11.2px;color:#262626;">5.768,20</div>
<div class="t" style="left:115.17px;top:354.58px;font-size:11px;color:#262626;">8</div>
<div class="t" style="left:127.75px;top:354.58px;font-size:11px;color:#262626;">N</div>
<div class="t" style="left:156.70px;top:354.58px;font-size:11px;color:#262626;">01.007</div>
<div class="t" style="left:277.50px;top:354.58px;font-size:11px;color:#262626;transform:scaleX(0.9949);">Acrylfugen bis 5mm</div>
<div class="t" style="left:555.35px;top:354.41px;font-size:11.2px;color:#262626;">380,200</div>
<div class="t" style="left:602.80px;top:354.58px;font-size:11px;color:#262626;transform:scaleX(0.8520);">lfm</div>
<div class="t" style="left:681.91px;top:354.49px;font-size:11.1px;color:#262626;">0,80</div>
<div class="t" style="left:765.78px;top:354.41px;font-size:11.2px;color:#262626;">304,21</div>
<div class="t" style="left:115.17px;top:369.85px;font-size:11px;color:#c4262c;font-weight:bold;-webkit-text-stroke:0;">9</div>
<div class="t" style="left:127.75px;top:369.85px;font-size:11px;color:#c4262c;font-weight:bold;-webkit-text-stroke:0;">T</div>
<div class="t" style="left:156.70px;top:369.85px;font-size:11px;color:#c4262c;font-weight:bold;-webkit-text-stroke:0;">02</div>
<div class="t" style="left:220.00px;top:369.85px;font-size:11px;color:#c4262c;font-weight:bold;-webkit-text-stroke:0;transform:scaleX(1.0592);">Titel</div>
<div class="t" style="left:277.50px;top:369.85px;font-size:11px;color:#c4262c;font-weight:bold;-webkit-text-stroke:0;transform:scaleX(1.0069);">Tagelohnarbeiten</div>
<div class="t" style="left:109.05px;top:383.52px;font-size:11px;color:#262626;">10</div>
<div class="t" style="left:127.75px;top:383.52px;font-size:11px;color:#262626;">N</div>
<div class="t" style="left:156.70px;top:383.52px;font-size:11px;color:#262626;">02.001</div>
<div class="t" style="left:277.50px;top:383.52px;font-size:11px;color:#262626;">Malergeselle</div>
<div class="t" style="left:556.61px;top:383.35px;font-size:11.2px;color:#262626;">R 6,000</div>
<div class="t" style="left:602.80px;top:383.52px;font-size:11px;color:#262626;transform:scaleX(0.9385);">Std</div>
<div class="t" style="left:675.73px;top:383.43px;font-size:11.1px;color:#262626;">36,00</div>
<div class="t" style="left:765.78px;top:383.35px;font-size:11.2px;color:#262626;">216,00</div>
<div class="t" style="left:109.88px;top:397.99px;font-size:11px;color:#262626;">11</div>
<div class="t" style="left:156.70px;top:397.99px;font-size:11px;color:#262626;">02.002</div>
<div class="t" style="left:277.50px;top:397.99px;font-size:11px;color:#262626;transform:scaleX(1.0462);">Futspachtel</div>
<div class="t" style="left:550.39px;top:397.82px;font-size:11.2px;color:#262626;">R 17,500</div>
<div class="t" style="left:602.80px;top:397.99px;font-size:11px;color:#262626;transform:scaleX(0.9892);">kg</div>
<div class="t" style="left:681.91px;top:397.90px;font-size:11.1px;color:#262626;">1,35</div>
<div class="t" style="left:772.00px;top:397.82px;font-size:11.2px;color:#262626;">23,63</div>
<div class="t" style="left:127.75px;top:397.99px;font-size:11px;color:#ffffff;">N</div>
<div class="t" style="left:73.80px;top:520.00px;font-size:8.5px;color:#3c3c3c;transform:scaleX(1.0186);">Bitte jede Eingabe in der Tabelle mit &lt;ENTER&gt; bestätigen</div>
<div class="t" style="left:73.80px;top:530.60px;font-size:8.5px;color:#3c3c3c;transform:scaleX(1.0310);">Strg+I - Rechtschreibprüfung für aktuelle Position</div>
<div class="t" style="left:73.80px;top:541.20px;font-size:8.5px;color:#3c3c3c;transform:scaleX(0.9852);">Strg+D - LV Positionen neu durchnummerieren</div>
<div class="t" style="left:304.00px;top:520.00px;font-size:8.5px;color:#3c3c3c;transform:scaleX(0.9947);">F6 - Artikelverwaltung</div>
<div class="t" style="left:304.00px;top:530.60px;font-size:8.5px;color:#3c3c3c;transform:scaleX(1.1231);">F7  -  Letzte Suche Artikelnr</div>
<div class="t" style="left:304.00px;top:541.20px;font-size:8.5px;color:#3c3c3c;transform:scaleX(0.9795);">F12 - Artikel Direktsuche</div>
<div class="t" style="left:74.80px;top:557.39px;font-size:11px;color:#2a4474;transform:scaleX(1.0914);">Details zur aktuellen Eingabezeile</div>
<div class="t" style="left:82.70px;top:577.70px;font-size:10.4px;color:#2a2a2a;transform:scaleX(0.9853);">Details</div>
<div class="t" style="left:131.50px;top:577.70px;font-size:10.4px;color:#2a2a2a;transform:scaleX(0.9522);">Bild</div>
<div class="t" style="left:175.80px;top:577.70px;font-size:10.4px;color:#2a2a2a;transform:scaleX(1.0272);">G/T - Zu-/Abschläge</div>
<div class="t" style="left:288.00px;top:577.70px;font-size:10.4px;color:#2a2a2a;transform:scaleX(1.0119);">Special</div>
<div class="t" style="left:338.00px;top:577.70px;font-size:10.4px;color:#2a2a2a;transform:scaleX(1.0065);">Direkt-Mengenermittlung</div>
<div class="t" style="left:468.30px;top:577.70px;font-size:10.4px;color:#2a2a2a;transform:scaleX(1.0152);">Direkt-Preisber.</div>
<div class="t" style="left:558.75px;top:577.70px;font-size:10.4px;color:#2a2a2a;transform:scaleX(1.0113);">Preisspiegel</div>
<div class="t" style="left:632.00px;top:577.70px;font-size:10.4px;color:#2a2a2a;transform:scaleX(0.9741);">Summen</div>
<div class="t" style="left:86.20px;top:599.90px;font-size:10.4px;color:#333;transform:scaleX(1.0136);">Pos-Kommentar</div>
<div class="t" style="left:86.20px;top:620.50px;font-size:10.4px;color:#333;transform:scaleX(0.9724);">Zu- oder Abschlag</div>
<div class="t" style="left:249.60px;top:620.50px;font-size:10.4px;color:#333;">%</div>
<div class="t" style="left:85.90px;top:641.80px;font-size:10.4px;color:#333;transform:scaleX(0.9615);">MwSt-Satz</div>
<div class="t" style="left:85.90px;top:664.10px;font-size:10.4px;color:#333;transform:scaleX(1.0286);">Steuer</div>
<div class="t" style="left:85.90px;top:686.40px;font-size:10.4px;color:#333;transform:scaleX(0.9672);">Zuweisung</div>
<div class="t" style="left:194.00px;top:641.40px;font-size:10.4px;color:#222;">Standard</div>
<div class="t" style="left:194.00px;top:663.70px;font-size:10.4px;color:#222;">Standard</div>
<div class="t" style="left:194.00px;top:685.90px;font-size:10.4px;color:#222;">Standard</div>
<div class="t" style="left:313.30px;top:686.20px;font-size:10.4px;color:#333;">ID</div>
<div class="t" style="left:333.50px;top:684.90px;font-size:10.4px;color:#222;transform:scaleX(0.9660);">110601162110000008444</div>
<div class="t" style="left:495.40px;top:686.60px;font-size:10.4px;color:#333;transform:scaleX(1.0683);">Langtext</div>
<div class="t" style="left:550.80px;top:600.40px;font-size:10.4px;color:#222;transform:scaleX(1.0611);">Futspachtel</div>
</body></html>
